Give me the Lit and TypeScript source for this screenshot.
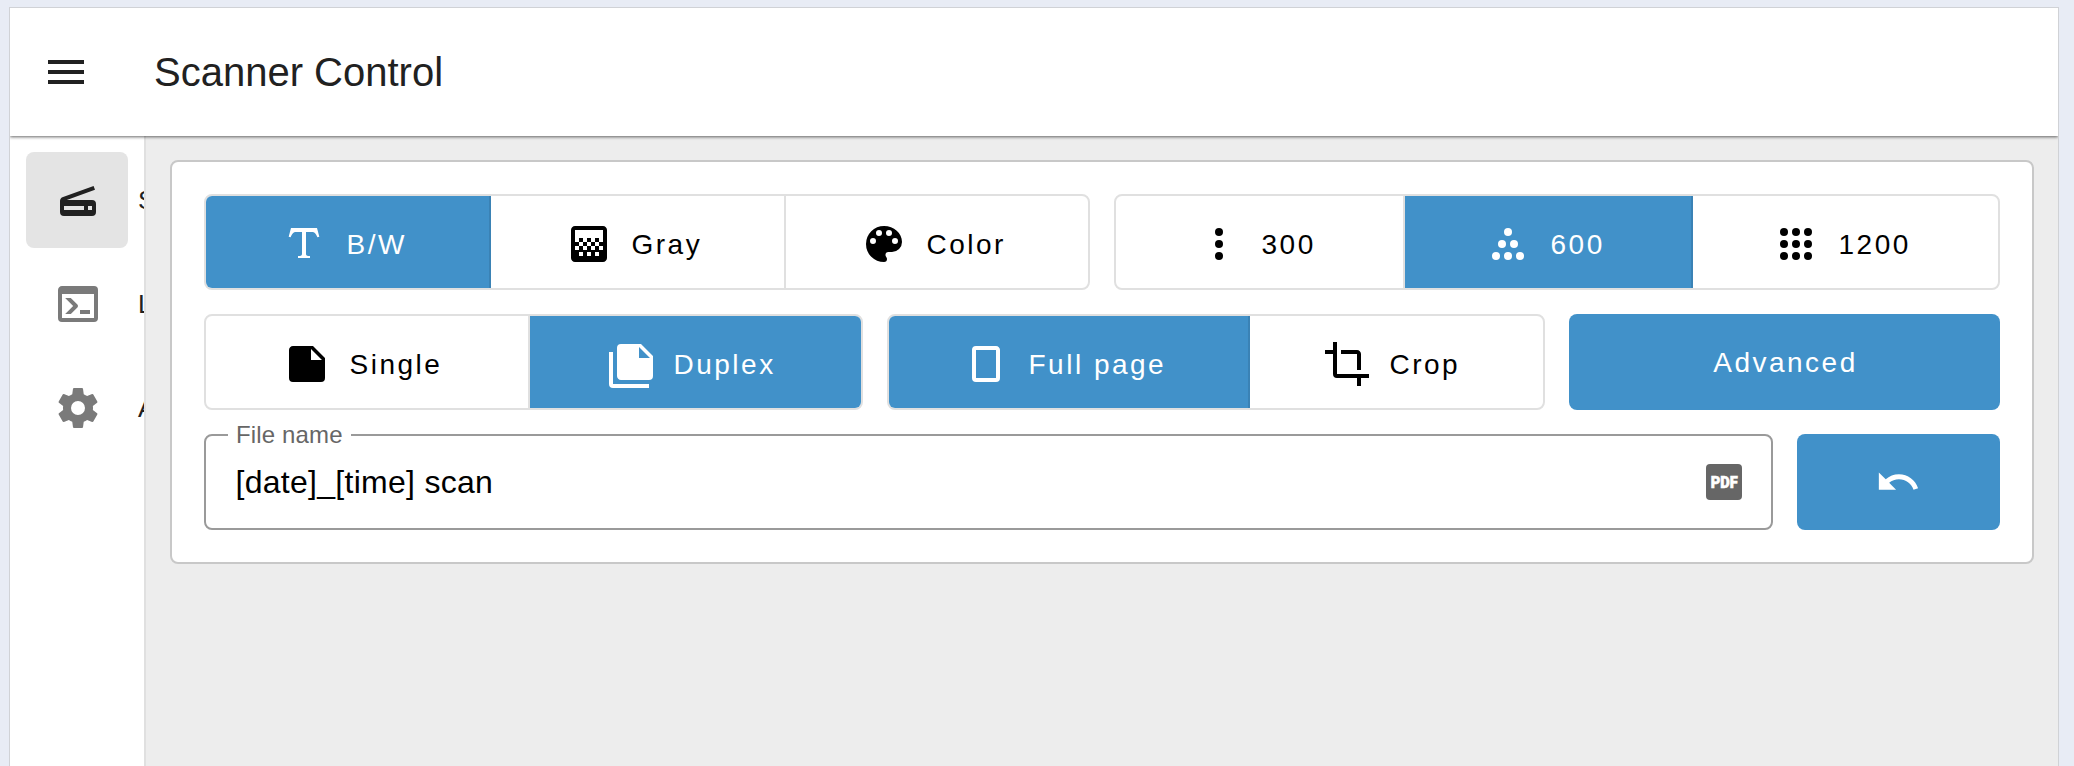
import { LitElement, html, css, svg } from "lit";
import { customElement, property } from "lit/decorators.js";

const ICONS: Record<string, unknown> = {
  menu: svg`<path d="M3,6H21V8H3V6M3,11H21V13H3V11M3,16H21V18H3V16Z"/>`,
  scanner: svg`<path fill-rule="evenodd" d="M4.2,10.6L19.8,5L20.5,6.9L6.4,12H19A2,2 0 0,1 21,14V18A2,2 0 0,1 19,20H5A2,2 0 0,1 3,18V12.5C3,11.7 3.5,10.9 4.2,10.6M5,15V17H15V15H5M17,15V17H19V15H17Z"/>`,
  console: svg`<path d="M20,19V7H4V19H20M20,3A2,2 0 0,1 22,5V19A2,2 0 0,1 20,21H4A2,2 0 0,1 2,19V5C2,3.89 2.9,3 4,3H20M13,17V15H18V17H13M9.58,13L5.57,9H8.4L11.7,12.3C12.09,12.69 12.09,13.33 11.7,13.72L8.42,17H5.59L9.58,13Z"/>`,
  cog: svg`<path d="M12,15.5A3.5,3.5 0 0,1 8.5,12A3.5,3.5 0 0,1 12,8.5A3.5,3.5 0 0,1 15.5,12A3.5,3.5 0 0,1 12,15.5M19.43,12.97C19.47,12.65 19.5,12.33 19.5,12C19.5,11.67 19.47,11.34 19.43,11L21.54,9.37C21.73,9.22 21.78,8.95 21.66,8.73L19.66,5.27C19.54,5.05 19.27,4.96 19.05,5.05L16.56,6.05C16.04,5.66 15.5,5.32 14.87,5.07L14.5,2.42C14.46,2.18 14.25,2 14,2H10C9.75,2 9.54,2.18 9.5,2.42L9.13,5.07C8.5,5.32 7.96,5.66 7.44,6.05L4.95,5.05C4.73,4.96 4.46,5.05 4.34,5.27L2.34,8.73C2.21,8.95 2.27,9.22 2.46,9.37L4.57,11C4.53,11.34 4.5,11.67 4.5,12C4.5,12.33 4.53,12.65 4.57,12.97L2.46,14.63C2.27,14.78 2.21,15.05 2.34,15.27L4.34,18.73C4.46,18.95 4.73,19.03 4.95,18.95L7.44,17.94C7.96,18.34 8.5,18.68 9.13,18.93L9.5,21.58C9.54,21.82 9.75,22 10,22H14C14.25,22 14.46,21.82 14.5,21.58L14.87,18.93C15.5,18.67 16.04,18.34 16.56,17.94L19.05,18.95C19.27,19.03 19.54,18.95 19.66,18.73L21.66,15.27C21.78,15.05 21.73,14.78 21.54,14.63L19.43,12.97Z"/>`,
  text: svg`<path d="M18.5,4L19.66,8.35L18.7,8.61C18.25,7.74 17.79,6.87 17.26,6.43C16.73,6 16.11,6 15.5,6H13V16.5C13,17 13,17.5 13.33,17.75C13.67,18 14.33,18 15,18V19H9V18C9.67,18 10.33,18 10.67,17.75C11,17.5 11,17 11,16.5V6H8.5C7.89,6 7.27,6 6.74,6.43C6.21,6.87 5.75,7.74 5.3,8.61L4.34,8.35L5.5,4H18.5Z"/>`,
  gradient: svg`<path d="M11 9h2v2h-2zm-2 2h2v2H9zm4 0h2v2h-2zm2-2h2v2h-2zM7 9h2v2H7zm12-6H5c-1.1 0-2 .9-2 2v14c0 1.1.9 2 2 2h14c1.1 0 2-.9 2-2V5c0-1.1-.9-2-2-2zM9 18H7v-2h2v2zm4 0h-2v-2h2v2zm4 0h-2v-2h2v2zm2-7h-2v2h2v2h-2v-2h-2v2h-2v-2h-2v2H9v-2H7v2H5v-2h2v-2H5V5h14v6z"/>`,
  palette: svg`<path d="M17.5,12A1.5,1.5 0 0,1 16,10.5A1.5,1.5 0 0,1 17.5,9A1.5,1.5 0 0,1 19,10.5A1.5,1.5 0 0,1 17.5,12M14.5,8A1.5,1.5 0 0,1 13,6.5A1.5,1.5 0 0,1 14.5,5A1.5,1.5 0 0,1 16,6.5A1.5,1.5 0 0,1 14.5,8M9.5,8A1.5,1.5 0 0,1 8,6.5A1.5,1.5 0 0,1 9.5,5A1.5,1.5 0 0,1 11,6.5A1.5,1.5 0 0,1 9.5,8M6.5,12A1.5,1.5 0 0,1 5,10.5A1.5,1.5 0 0,1 6.5,9A1.5,1.5 0 0,1 8,10.5A1.5,1.5 0 0,1 6.5,12M12,3A9,9 0 0,0 3,12A9,9 0 0,0 12,21A1.5,1.5 0 0,0 13.5,19.5C13.5,19.11 13.35,18.76 13.11,18.5C12.88,18.23 12.73,17.88 12.73,17.5A1.5,1.5 0 0,1 14.23,16H16A5,5 0 0,0 21,11C21,6.58 16.97,3 12,3Z"/>`,
  dots3: svg`<circle cx="12" cy="6" r="2"/><circle cx="12" cy="12" r="2"/><circle cx="12" cy="18" r="2"/>`,
  dots6: svg`<circle cx="12" cy="6" r="2"/><circle cx="9" cy="12" r="2"/><circle cx="15" cy="12" r="2"/><circle cx="6" cy="18" r="2"/><circle cx="12" cy="18" r="2"/><circle cx="18" cy="18" r="2"/>`,
  dots9: svg`${[6, 12, 18].map((y) => [6, 12, 18].map((x) => svg`<circle cx=${x} cy=${y} r="2"/>`))}`,
  note: svg`<path d="M14,10V4.5L19.5,10M5,3C3.89,3 3,3.89 3,5V19A2,2 0 0,0 5,21H19A2,2 0 0,0 21,19V9L15,3H5Z"/>`,
  notes: svg`<path d="M16,9H21.5L16,3.5V9M7,2H17L23,8V18A2,2 0 0,1 21,20H7C5.89,20 5,19.1 5,18V4A2,2 0 0,1 7,2M3,6V22H21V24H3A2,2 0 0,1 1,22V6H3Z"/>`,
  portrait: svg`<path d="M17,19H7V5H17M17,3H7A2,2 0 0,0 5,5V19A2,2 0 0,0 7,21H17A2,2 0 0,0 19,19V5C19,3.89 18.1,3 17,3Z"/>`,
  crop: svg`<path d="M7,17V1H5V5H1V7H5V17A2,2 0 0,0 7,19H17V23H19V19H23V17M17,15H19V7C19,5.89 18.1,5 17,5H9V7H17V15Z"/>`,
  undo: svg`<path d="M12.5,8C9.85,8 7.45,9 5.6,10.6L2,7V16H11L7.38,12.38C8.77,11.22 10.54,10.5 12.5,10.5C16.04,10.5 19.05,12.81 20.1,16L22.47,15.22C21.08,11.03 17.15,8 12.5,8Z"/>`,
  pdf: svg`<rect x="3" y="3" width="18" height="18" rx="2"/><text x="5.4" y="15" fill="#fff" stroke="#fff" stroke-width=".3" font-family="Roboto, sans-serif" font-weight="900" font-size="8.4" textLength="13.5" lengthAdjust="spacingAndGlyphs">PDF</text>`,
};

@customElement("md-icon")
export class MdIcon extends LitElement {
  @property() name = "";
  static styles = css`
    :host { display: block; flex: none; width: 48px; height: 48px; }
    .glyph { display: block; width: 100%; height: 100%; fill: currentColor; overflow: visible; }
  `;
  render() {
    return html`<svg class="glyph" viewBox="0 0 24 24">${ICONS[this.name]}</svg>`;
  }
}

interface Option { icon: string; label: string; width: number; active?: boolean; }

@customElement("toggle-group")
export class ToggleGroup extends LitElement {
  @property({ attribute: false }) options: Option[] = [];
  @property({ type: Number }) inset = 74;
  static styles = css`
    :host {
      display: flex; flex: none; box-sizing: border-box; height: 96px;
      border: 2px solid #e0e0e0; border-radius: 8px; overflow: hidden; background: #fff;
    }
    .option {
      display: flex; align-items: center; gap: 18.5px; box-sizing: border-box; flex: none;
      padding-top: 4px; border-right: 2px solid #e0e0e0; color: #000;
      font-size: 28px; letter-spacing: 2.5px; white-space: nowrap;
    }
    .option:last-child { border-right: 0; }
    .label { padding-top: 2px; }
    .active { background: #4191c9; color: #fff; border-right-color: #3a82b5; }
  `;
  render() {
    return this.options.map(
      (o) => html`<div class="option ${o.active ? "active" : ""}" style="width:${o.width}px;padding-left:${this.inset}px">
        <md-icon name=${o.icon}></md-icon><span class="label">${o.label}</span>
      </div>`
    );
  }
}

@customElement("app-root")
export class AppRoot extends LitElement {
  static styles = css`
    :host {
      display: block; box-sizing: border-box; height: 766px; overflow: hidden;
      padding: 7px 15px 0 9px; background: #e8ecf5;
      font-family: "Liberation Sans", Arial, sans-serif; color: #212121;
    }
    .frame {
      display: flex; flex-direction: column; height: 759px; box-sizing: border-box;
      border: 1px solid #d0d2d6; border-bottom: 0; background: #fff; overflow: hidden;
    }
    .bar {
      display: flex; align-items: center; gap: 64px; flex: none; height: 128px;
      box-sizing: border-box; padding-left: 32px; background: #fff; z-index: 1;
      box-shadow: 0 1px 3px rgba(0, 0, 0, .6);
    }
    .title { font-size: 40px; line-height: 48px; white-space: nowrap; }
    .body { display: flex; flex: 1; min-height: 0; }
    .nav {
      display: flex; flex-direction: column; gap: 8px; flex: none; width: 136px;
      box-sizing: border-box; padding: 16px 0 0 16px; border-right: 2px solid #e0e0e0; overflow: hidden;
    }
    .item { display: flex; align-items: center; gap: 10px; height: 96px; font-size: 26px; white-space: nowrap; color: #212121; }
    .tile { display: flex; align-items: center; flex: none; box-sizing: border-box; width: 102px; height: 96px; padding-left: 28px; border-radius: 8px; color: #7a7a7a; }
    .item.on .tile { background: #e4e4e4; color: #212121; }
    .main { flex: 1; min-width: 0; background: #ededed; padding: 24px; }
    .card {
      display: flex; flex-direction: column; gap: 24px; padding: 32px;
      border: 2px solid #c8c8c8; border-radius: 8px; background: #fff;
    }
    .row { display: flex; gap: 24px; height: 96px; }
    .button {
      display: flex; align-items: center; justify-content: center; flex: 1; border-radius: 8px;
      background: #4191c9; color: #fff; font-size: 28px; letter-spacing: 2.5px;
    }
    .advanced { padding: 2px 0 0 2px; box-sizing: border-box; }
    .undo { flex: none; width: 203px; box-sizing: border-box; padding-right: 2px; }
    .undo md-icon { width: 46px; height: 46px; }
    .field {
      display: block; flex: 1; min-width: 0; box-sizing: border-box; height: 108px;
      margin: -12px 0 0; padding: 0 22.7px 0 22px; border: 2px solid #9a9a9a; border-radius: 8px;
    }
    .legend { padding: 0 8px; height: 26px; line-height: 26px; font-size: 24px; letter-spacing: .15px; color: #666; }
    .entry { display: flex; align-items: center; justify-content: space-between; height: 68px; padding-left: 7.5px; }
    .value { font-size: 32px; letter-spacing: .28px; color: #000; white-space: nowrap; }
    .pdf { color: #666; }
  `;

  private mode: Option[] = [
    { icon: "text", label: "B/W", width: 285, active: true },
    { icon: "gradient", label: "Gray", width: 295 },
    { icon: "palette", label: "Color", width: 302 },
  ];
  private dpi: Option[] = [
    { icon: "dots3", label: "300", width: 289 },
    { icon: "dots6", label: "600", width: 288, active: true },
    { icon: "dots9", label: "1200", width: 305 },
  ];
  private sides: Option[] = [
    { icon: "note", label: "Single", width: 324 },
    { icon: "notes", label: "Duplex", width: 331, active: true },
  ];
  private area: Option[] = [
    { icon: "portrait", label: "Full page", width: 361, active: true },
    { icon: "crop", label: "Crop", width: 293 },
  ];

  render() {
    const nav = [["scanner", "S"], ["console", "L"], ["cog", "A"]];
    return html`
      <div class="frame">
        <header class="bar"><md-icon name="menu"></md-icon><div class="title">Scanner Control</div></header>
        <div class="body">
          <nav class="nav">
            ${nav.map(([icon, label], i) => html`<div class="item ${i === 0 ? "on" : ""}">
              <div class="tile"><md-icon name=${icon}></md-icon></div><span>${label}</span>
            </div>`)}
          </nav>
          <main class="main">
            <section class="card">
              <div class="row">
                <toggle-group .options=${this.mode} .inset=${74}></toggle-group>
                <toggle-group .options=${this.dpi} .inset=${79}></toggle-group>
              </div>
              <div class="row">
                <toggle-group .options=${this.sides} .inset=${77}></toggle-group>
                <toggle-group .options=${this.area} .inset=${73}></toggle-group>
                <div class="button advanced">Advanced</div>
              </div>
              <div class="row">
                <fieldset class="field">
                  <legend class="legend">File name</legend>
                  <div class="entry"><span class="value">[date]_[time] scan</span><md-icon class="pdf" name="pdf"></md-icon></div>
                </fieldset>
                <div class="button undo"><md-icon name="undo"></md-icon></div>
              </div>
            </section>
          </main>
        </div>
      </div>`;
  }
}
